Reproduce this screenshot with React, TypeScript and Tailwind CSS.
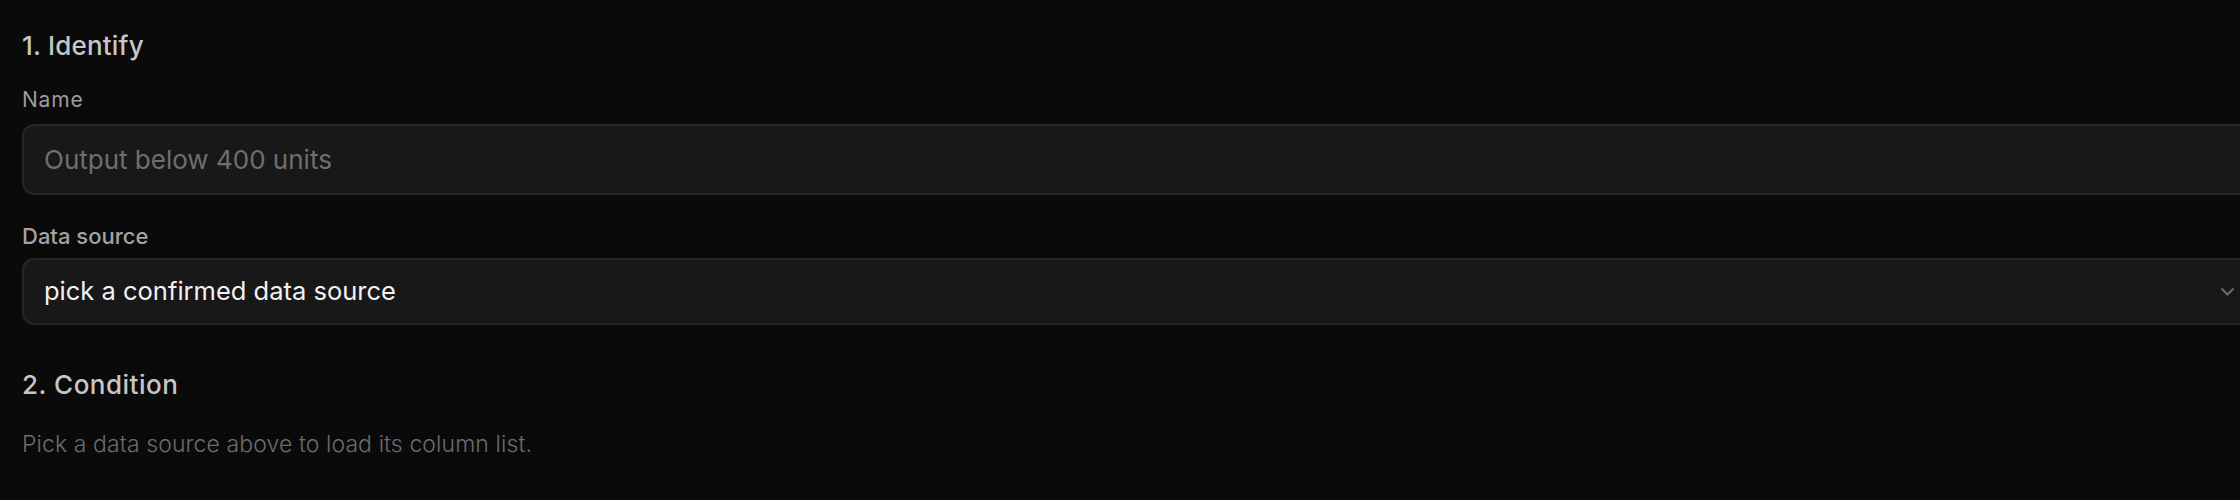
export default function App() {
  return (
    <div
      className="w-[2240px] h-[500px] overflow-hidden bg-[#0a0a0a] pl-[22px] pt-[30px]"
      style={{ fontFamily: "Inter, 'Noto Sans', sans-serif" }}
    >
      <div className="w-[2233px] flex flex-col">
        <h2 className="text-[26px] leading-[32px] font-medium tracking-[0.2px] text-[#c6c6c6]">1. Identify</h2>

        <label className="mt-[24px] text-[21px] leading-[28px] tracking-[0.8px] text-[#9c9c9c]">Name</label>
        <div className="mt-[10px] h-[71px] rounded-[12px] border-2 border-[#262626] bg-[#181818] flex items-center px-[20px]">
          <span className="text-[26px] text-[#6f6f6f]">Output below 400 units</span>
        </div>

        <label className="mt-[26px] text-[22px] leading-[30px] font-medium text-[#a3a3a3]">Data source</label>
        <div className="mt-[7px] h-[67px] rounded-[12px] border-2 border-[#262626] bg-[#181818] flex items-center justify-between pl-[20px] pr-[18px]">
          <span className="text-[25.5px] text-[#f2f2f2]">pick a confirmed data source</span>
          <svg width="15" height="9" viewBox="0 0 15 9" fill="none">
            <path d="M1.5 1.5 L7.5 7.5 L13.5 1.5" stroke="#6b6b6b" strokeWidth="2" />
          </svg>
        </div>

        <h2 className="mt-[44px] text-[26px] leading-[32px] font-medium tracking-[0.5px] text-[#c6c6c6]">2. Condition</h2>
        <p className="mt-[28px] text-[23px] leading-[30px] font-light tracking-[0.1px] text-[#6c6c6c]">
          Pick a data source above to load its column list.
        </p>
      </div>
    </div>
  );
}
